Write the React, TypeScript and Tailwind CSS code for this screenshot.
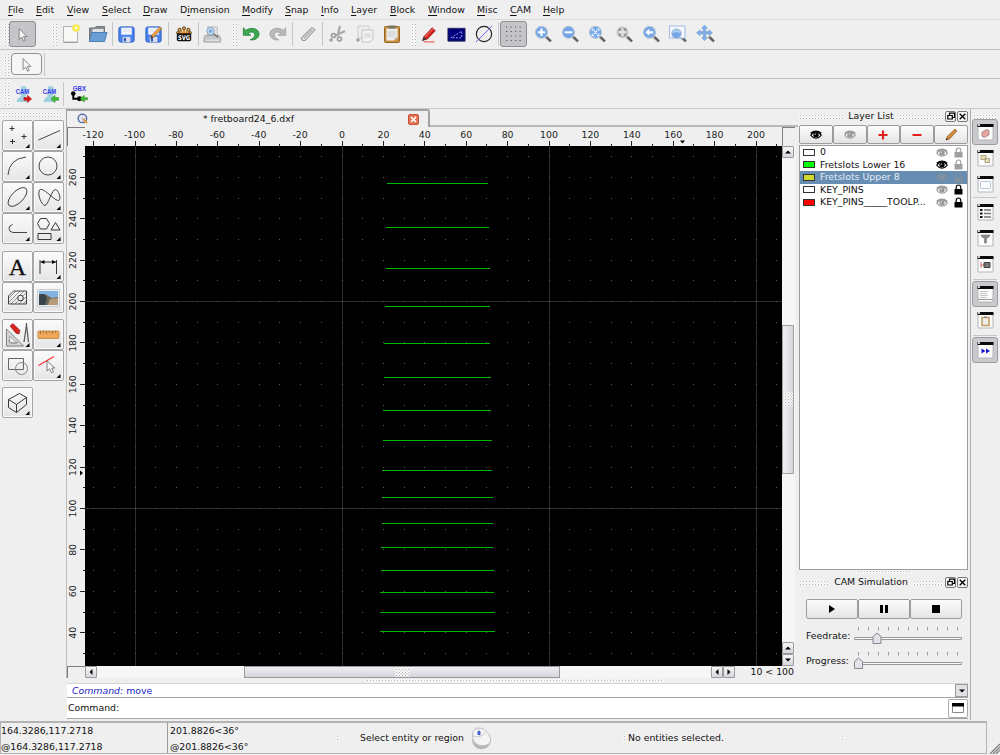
import type { ReactNode } from "react";

const menus = [
  { label: "File", key: 0, width: 28 },
  { label: "Edit", key: 0, width: 31 },
  { label: "View", key: 0, width: 35 },
  { label: "Select", key: 0, width: 41 },
  { label: "Draw", key: 0, width: 37 },
  { label: "Dimension", key: 1, width: 62 },
  { label: "Modify", key: 0, width: 43 },
  { label: "Snap", key: 0, width: 36 },
  { label: "Info", key: 0, width: 30 },
  { label: "Layer", key: 0, width: 39 },
  { label: "Block", key: 0, width: 38 },
  { label: "Window", key: 0, width: 49 },
  { label: "Misc", key: 0, width: 33 },
  { label: "CAM", key: 0, width: 33 },
  { label: "Help", key: 0, width: 40 },
];

// x1, x2, y in canvas pixels
const frets = [
  [302, 403, 37],
  [301, 404, 81],
  [301, 405, 122],
  [300, 405, 160],
  [299, 405, 197],
  [299, 406, 231],
  [298, 406, 264],
  [298, 407, 294],
  [297, 407, 324],
  [297, 408, 351],
  [297, 408, 377],
  [296, 408, 401],
  [296, 409, 424],
  [295, 409, 446],
  [295, 410, 466],
  [295, 410, 485],
];

const layers = [
  { name: "0", color: "#ffffff", visible: false, locked: false },
  { name: "Fretslots Lower 16", color: "#00ff00", visible: true, locked: false },
  { name: "Fretslots Upper 8", color: "#ced92e", visible: false, locked: false, selected: true },
  { name: "KEY_PINS", color: "#ffffff", visible: false, locked: true },
  { name: "KEY_PINS_____TOOLP...", color: "#ff0000", visible: false, locked: true },
];

const SCALE = 2.07;
const X0 = 257.5;
const Y0 = 570;

function range(from: number, to: number, step: number) {
  const out: number[] = [];
  for (let v = from; v <= to; v += step) out.push(v);
  return out;
}

function Svg({ size = 20, children }: { size?: number; children: ReactNode }) {
  return (
    <svg width={size} height={size} viewBox="0 0 20 20" fill="none" className="block shrink-0">
      {children}
    </svg>
  );
}

function Grip() {
  return (
    <div className="h-[23px] w-[5px] shrink-0 bg-[radial-gradient(#b0b0b0_0.7px,#fbfbfb_1px,transparent_1.5px)] bg-[length:3px_3px]" />
  );
}

function HGrip({ className = "" }: { className?: string }) {
  return (
    <div
      className={`h-[5px] bg-[radial-gradient(#b0b0b0_0.7px,#fbfbfb_1px,transparent_1.5px)] bg-[length:3px_3px] ${className}`}
    />
  );
}

function Sep({ tight = false }: { tight?: boolean }) {
  return <div className={`h-6 w-px shrink-0 bg-[#c6c6c6] ${tight ? "ml-px" : "mx-px"}`} />;
}

function Tool({ children }: { children: ReactNode }) {
  return <div className="flex h-[27px] w-[27px] shrink-0 items-center justify-center">{children}</div>;
}

function Pressed({ children }: { children: ReactNode }) {
  return (
    <div className="flex h-[26px] w-[27px] shrink-0 items-center justify-center rounded-[3px] border border-[#8f8f93] bg-[#c5c5c9]">
      {children}
    </div>
  );
}

function Cursor() {
  return (
    <Svg size={17}>
      <path d="M6 3v13l3-3 2.3 5 2-1-2.2-4.7h4.2z" fill="#f4f4f4" stroke="#777" strokeWidth="1" />
    </Svg>
  );
}

function FloppyShape() {
  return (
    <>
      <rect x="2" y="2" width="16" height="16" rx="2" fill="#4b83ee" stroke="#285bc0" />
      <rect x="4.5" y="2.8" width="11" height="7.4" fill="#f4f7fd" />
      <path d="M6 5h8M6 7h8" stroke="#c6cedb" strokeWidth=".6" />
      <rect x="6" y="12.5" width="8" height="5.5" fill="#d8dfe9" />
      <rect x="7.2" y="13.5" width="2.3" height="3.8" fill="#2b5db8" />
    </>
  );
}

function ZoomIcon({ kind }: { kind: string }) {
  const gray = kind === "select";
  return (
    <Svg>
      <path d="m12.5 12.5 5.5 5" stroke="#b7b7b7" strokeWidth="3.2" />
      <path d="m13.5 13 4.4 4.4" stroke="#5c5c5c" strokeWidth="2" />
      {kind === "window" && <rect x="1.5" y="2" width="15.5" height="12" fill="#f7f9fc" stroke="#9dbbe4" />}
      {kind === "pan" ? (
        <path
          d="m8.500 1 3 3.400H9.700v3.200h3.400V5.800l3.400 3-3.400 3V10H9.700v3.400h1.800l-3 3.300-3-3.300h1.800V10H4v1.800l-3.500-3 3.500-3v1.800h3.300V4.400H5.500z"
          fill="#7fafe8"
          stroke="#6a94cc"
          strokeWidth=".5"
        />
      ) : (
        <circle
          cx="8.500"
          cy={kind === "window" ? 9.7 : 8.3}
          r={kind === "window" ? 4.8 : gray ? 5.6 : 6}
          fill={gray ? "#c0c0c0" : "#75a7e8"}
          stroke={gray ? "#d2d2d2" : "#b6c2d2"}
        />
      )}
      {kind === "window" && <path d="M5 8.500q3.500-3 7 0" stroke="#acd0f6" strokeWidth="2" />}
      {kind === "in" && <path d="M8.500 4.500v7.600M4.700 8.300h7.600" stroke="#fff" strokeWidth="2" />}
      {kind === "out" && <path d="M4.700 8.300h7.600" stroke="#fff" strokeWidth="2" />}
      {kind === "auto" && (
        <path d="M5.200 7V5h2M9.800 5h2v2M11.800 9.600v2h-2M7.200 11.600h-2v-2M6.700 6.500l3.600 3.600M10.300 6.500l-3.600 3.600" stroke="#e9f2ff" strokeWidth="1.100" />
      )}
      {gray && (
        <>
          <rect x="4.500" y="4.300" width="8" height="8" fill="#999" />
          <path d="M8.500 4.500v7.600M4.700 8.300h7.600" stroke="#e4e4e4" strokeWidth="2.400" />
        </>
      )}
      {kind === "prev" && <path d="m8.300 4.800-4 3.500 4 3.500V9.500h4V7.200h-4z" fill="#fff" />}
    </Svg>
  );
}

function MainToolbar() {
  return (
    <div className="flex h-[30px] items-center border-b border-[#c4c4c4] pb-px pl-1">
      <Grip />
      <Pressed><Cursor /></Pressed>
      <div className="w-[16px]" />
      <Grip />
      <Tool>
        <Svg>
          <path d="M2.500 2.500h14v15.500h-14z" fill="#f8f8f7" stroke="#b5b5b2" />
          <path d="M2.500 18.500h14" stroke="#9b9b9b" />
          <circle cx="15" cy="4" r="3.800" fill="#f5ec4b" />
          <circle cx="15" cy="4" r="1.400" fill="#fffde0" />
        </Svg>
      </Tool>
      <Tool>
        <Svg>
          <path d="M1.500 17V4h5L8 2.500h8.500V16z" fill="#858b90" stroke="#6f767b" />
          <path d="M4.500 5h11v6h-11z" fill="#dfe2e4" />
          <path d="M4 8.500h15L16.500 17.500H1.300z" fill="#699ed3" stroke="#4b7fb5" />
        </Svg>
      </Tool>
      <Sep tight />
      <Tool><Svg size={19}><FloppyShape /></Svg></Tool>
      <Tool>
        <Svg size={19}>
          <FloppyShape />
          <path d="m7 14 1-3 8.500-9 2 2-8.500 9z" fill="#f4a13d" stroke="#b06a1e" strokeWidth=".7" />
          <path d="m7 14 1-3 2 2z" fill="#333" />
        </Svg>
      </Tool>
      <Sep />
      <Tool>
        <Svg size={16}>
          <path d="M10 1v9M3.500 4l6.500 6 6.500-6M1.500 9h17" stroke="#e79b2d" strokeWidth="2.400" />
          <g fill="#eda339" stroke="#111" strokeWidth=".8">
            <circle cx="10" cy="2.800" r="2" />
            <circle cx="4.500" cy="4.600" r="2" />
            <circle cx="15.500" cy="4.600" r="2" />
            <circle cx="2.400" cy="8.600" r="1.700" />
            <circle cx="17.600" cy="8.600" r="1.700" />
          </g>
          <rect x="1" y="9" width="18" height="10" rx="2" fill="#111" />
          <text x="2.500" y="17" textLength="15" lengthAdjust="spacingAndGlyphs" fill="#fff" className="text-[8px] font-bold">SVG</text>
        </Svg>
      </Tool>
      <Sep tight />
      <Tool>
        <Svg size={19}>
          <path d="M5 2h10v9H5z" fill="#e8e8e8" stroke="#bbb" />
          <path d="M2 11h15l1.500 3v4H1v-4z" fill="#c4c6c8" stroke="#a4a6a8" />
          <path d="M3 16h14" stroke="#eee" />
          <circle cx="8" cy="6.500" r="4" fill="#bcd8f1" stroke="#8ba3b8" />
          <circle cx="8" cy="6.500" r="1.700" fill="#74a5d6" />
          <path d="m11 9 5 4" stroke="#777" strokeWidth="1.600" />
        </Svg>
      </Tool>
      <div className="w-1.5" />
      <Grip />
      <Tool>
        <Svg size={18}>
          <path d="M1.500 3v8.500h8.300L7 9c4-2.500 8-.5 7 3-.6 2-2.600 3.600-5 4.500 6 .8 10-2.400 10-6.500 0-5.800-8.500-8.500-14.700-4z" fill="#3da650" stroke="#1c7c31" strokeWidth=".8" />
        </Svg>
      </Tool>
      <Tool>
        <Svg size={18}>
          <path d="M18.500 3v8.500h-8.300L13 9c-4-2.500-8-.5-7 3 .6 2 2.600 3.600 5 4.500-6 .8-10-2.400-10-6.500 0-5.800 8.500-8.500 14.700-4z" fill="#b9b9b9" stroke="#9a9a9a" strokeWidth=".8" />
        </Svg>
      </Tool>
      <Sep />
      <Tool>
        <Svg size={18}>
          <path d="m2.500 14.500 11-11q3-.5 4 2L7 17q-4 1-4.500-2.500z" fill="#e2e2e2" stroke="#9a9a9a" strokeWidth="1.200" />
          <path d="m5.500 14.500 9-9" stroke="#a5a5a5" strokeWidth="1.300" />
        </Svg>
      </Tool>
      <Sep />
      <Tool>
        <Svg>
          <path d="M12 2 9.500 12M17 7l-10 5" stroke="#aaa" strokeWidth="2.300" />
          <circle cx="5.500" cy="11.500" r="2" stroke="#9b9b9b" strokeWidth="1.600" />
          <circle cx="11.500" cy="15" r="2" stroke="#9b9b9b" strokeWidth="1.600" />
          <path d="M1 16h4M3 14v4" stroke="#888" />
        </Svg>
      </Tool>
      <Tool>
        <Svg>
          <path d="M3 2h11v12H3z" fill="#eee" stroke="#cdcdcd" />
          <path d="M7 6h11v9l-3 3H7z" fill="#f3f3f3" stroke="#c4c4c4" />
          <path d="M9 9h7v5H9z" fill="#e2e2e2" />
          <path d="M1 16h4M3 14v4" stroke="#888" />
        </Svg>
      </Tool>
      <Tool>
        <Svg>
          <rect x="2.500" y="2.500" width="15" height="16" rx="1" fill="#c8903f" stroke="#956526" />
          <path d="M4.500 4.500h11v9l-3 3h-8z" fill="#ededed" />
          <path d="M6 8h8M6 10h8M6 12h6" stroke="#ccc" />
          <path d="M6.500 1.500h7v3h-7z" fill="#77736a" />
          <path d="m12.500 16.500 3-3h-3z" fill="#b7b7b7" />
        </Svg>
      </Tool>
      <div className="w-1.5" />
      <Grip />
      <Tool>
        <Svg size={17}>
          <path d="m3 13 10-11 4 3.500L7 16z" fill="#d41e1e" stroke="#8f1717" strokeWidth=".7" />
          <path d="m5 13 9-10" stroke="#f26b5d" strokeWidth="1.400" />
          <path d="m3 12.500-2 5.500 6-2.500z" fill="#4a312a" />
          <path d="M3 18.700h13" stroke="#f04848" strokeWidth="1.200" />
        </Svg>
      </Tool>
      <Tool>
        <Svg size={19}>
          <path d="M1 3.500h18v13.500H1z" fill="#00007c" stroke="#26265a" />
          <path d="m4 13.500 11.500-7v7z" stroke="#a9a9e5" strokeDasharray="2 1.500" />
        </Svg>
      </Tool>
      <Tool>
        <Svg size={18}>
          <circle cx="10" cy="10" r="8.500" stroke="#222" strokeWidth="1.300" />
          <path d="M1 19 19 1" stroke="#6464f3" />
        </Svg>
      </Tool>
      <div className="mx-px h-6 w-px bg-[#c6c6c6]" />
      <Pressed>
        <Svg>
          {[3, 7.5, 12, 16.5].map((y) => (
            <path key={y} d={`M2 ${y}h17`} stroke="#555" strokeWidth="1.200" strokeDasharray="1.200 3.300" />
          ))}
        </Svg>
      </Pressed>
      <div className="ml-[2px] flex gap-[0.2px]">
        {["in", "out", "auto", "select", "prev", "window", "pan"].map((kind) => (
          <Tool key={kind}><ZoomIcon kind={kind} /></Tool>
        ))}
      </div>
    </div>
  );
}

function CamIcon({ red }: { red?: boolean }) {
  return (
    <Svg size={18}>
      <path d="M8 1.500h5l2 5-2 7 3 5.500H3q0-4 4-6z" fill="#9ed1dc" />
      <text x="2" y="10.500" textLength="15" lengthAdjust="spacingAndGlyphs" fill="#3a3aee" className="font-['Liberation_Sans'] text-[8px] font-bold">CAM</text>
      {red ? (
        <path d="M11 14h4v-2.500l4.500 4-4.500 4V17h-4z" fill="#e31515" stroke="#961010" strokeWidth=".6" />
      ) : (
        <path d="M19.500 14h-4v-2.500l-4.500 4 4.500 4V17h4z" fill="#43bd35" stroke="#27851d" strokeWidth=".6" />
      )}
    </Svg>
  );
}

const toolRows: ReactNode[][] = [
  [
    <path key="a" d="M9 5v5M6.500 7.500h5M21 13v5M18.500 15.500h5M9.500 18v5M7 20.500h5" stroke="#222" />,
    <path key="b" d="M4.500 19 26 9.500" stroke="#333" />,
  ],
  [
    <path key="a" d="M5 23Q6 7 23 5" stroke="#333" />,
    <circle key="b" cx="14" cy="14" r="9" stroke="#333" />,
  ],
  [
    <ellipse key="a" cx="14.500" cy="14" rx="12" ry="5.800" transform="rotate(-45 14.500 14)" stroke="#333" />,
    <path key="b" d="M5.500 7C3 12 8 22.500 11 22.500S18 6 21.500 6.500 28 18 24 17.500 8 3 5.500 7z" stroke="#333" />,
  ],
  [
    <path key="a" d="M9.500 10.500Q6 11.500 6 14.500q0 3.500 4 4h14" stroke="#333" />,
    <path key="b" d="M6.500 4.500h6l3 5-3 5.500h-6l-3-5.500zM21.500 8.500l4.500 7.500h-9zM4 19.500h13v6H4z" stroke="#222" />,
  ],
];

function ToolButton({ children, menu = true }: { children: ReactNode; menu?: boolean }) {
  return (
    <div className="flex h-[31px] w-[31px] items-center justify-center rounded-[2px] border border-[#a6a6a9] bg-linear-to-b from-[#fbfbfb] to-[#e5e5e7] shadow-[inset_0_0_0_1px_#fafafa]">
      <svg width="29" height="29" viewBox="0 0 29 29" fill="none" strokeWidth=".9">
        {children}
        {menu && <path d="M26.500 23v4h-4z" fill="#000" />}
      </svg>
    </div>
  );
}

function LeftTools() {
  return (
    <div className="w-[66px] shrink-0 pl-[2px] pt-[3px]">
      <HGrip className="mb-[3px] w-[61px]" />
      <div className="grid grid-cols-[31px_31px]">
        {toolRows.flat().map((icon, i) => (
          <ToolButton key={i}>{icon}</ToolButton>
        ))}
      </div>
      <div className="mt-[7px] grid grid-cols-[31px_31px]">
        <ToolButton menu={false}>
          <text x="14.500" y="23" textAnchor="middle" fill="#111" stroke="#111" strokeWidth=".3" className="font-['Liberation_Serif'] text-[24px]">A</text>
        </ToolButton>
        <ToolButton>
          <path d="M6 22V8M22.500 22V8M6.500 10h16" stroke="#222" />
          <path d="m6.500 10 4-2v4zM22 10l-4-2v4z" fill="#000" />
        </ToolButton>
        <ToolButton menu={false}>
          <clipPath id="hatch"><path d="m5.500 13 5-5h13v13h-18z" /></clipPath>
          <g clipPath="url(#hatch)">
            <path d="M0 13 13 0M0 17 17 0M0 21 21 0M2 23 25 0M6 23 29 0M10 23 33 0M14 23 37 0M18 23 41 0" stroke="#666" strokeWidth=".7" />
          </g>
          <path d="m5.500 13 5-5h13v13h-18z" stroke="#333" />
          <circle cx="17.500" cy="15" r="2.800" fill="#eee" stroke="#222" />
        </ToolButton>
        <ToolButton menu={false}>
          <path d="M3.500 6.500h22v17h-22z" fill="#e9eef2" stroke="#c6c9cc" />
          <path d="M5 8h19v8H5z" fill="#83b4e0" />
          <path d="m5 11 6 0 7 4 6-1v8H5z" fill="#6e695d" />
          <path d="m14 22 2-6 8-1v7z" fill="#b59b77" />
          <path d="M5 12q5-3 8 3l-2 7H5z" fill="#36444a" />
        </ToolButton>
      </div>
      <div className="mt-[6px] grid grid-cols-[31px_31px]">
        <ToolButton>
          <path d="M3.500 9v17h17z" fill="#d6d6d6" stroke="#777" />
          <path d="M6.500 16v7H14z" fill="#eee" stroke="#999" />
          <path d="M5 20a7 7 0 0 0 10 2" stroke="#888" />
          <path d="m7 6 3-2.500 7 7-1 3.500-3-.8z" fill="#d92323" stroke="#8b1414" strokeWidth=".6" />
          <path d="m23.500 5-2.500 17M23.500 5l2 17M23.500 3v3" stroke="#555" strokeWidth="1.200" />
        </ToolButton>
        <ToolButton>
          <rect x="4" y="11" width="21" height="7.500" rx="1" fill="#eea75b" stroke="#c58a4a" />
          <path d="M6.500 11v3M9.500 11v2M12.500 11v3M15.500 11v2M18.500 11v3M21.500 11v2" stroke="#8c5a25" strokeWidth=".7" />
        </ToolButton>
        <ToolButton menu={false}>
          <path d="M5.500 7.500h15v11h-15z" stroke="#555" />
          <circle cx="18.500" cy="17.500" r="6" stroke="#777" />
        </ToolButton>
        <ToolButton>
          <path d="m4.500 14.500 15.500-9" stroke="#f23333" strokeWidth="1.200" />
          <path d="M13 10v10l2.500-2.200 2 4 2-1-1.800-3.800h3.300z" fill="#f8f8f8" stroke="#666" strokeWidth=".8" />
        </ToolButton>
      </div>
      <div className="mt-[6px]">
        <ToolButton>
          <path d="m5.500 11.500 11-6 7 4v7l-10 8-8-5zM5.500 11.500l8 5 10-7M13.500 16.500v8" stroke="#222" />
        </ToolButton>
      </div>
    </div>
  );
}

function TopRuler() {
  return (
    <svg width="697" height="19" className="block overflow-visible">
      {range(-120, 210, 10).map((v) => {
        const x = X0 + v * SCALE;
        const major = v % 20 === 0;
        return (
          <g key={v}>
            <path d={`M${Math.round(x) - 0.5} ${major ? 14 : 17}V19`} stroke="#222" />
            {major && (
              <text x={x - (v < 0 ? 1 : 0.5)} y="10.500" textAnchor="middle" fill="#222">{v}</text>
            )}
          </g>
        );
      })}
      <path d="M595 13.500h5l-2.500 3z" fill="#000" />
    </svg>
  );
}

function SideRuler() {
  return (
    <svg width="18" height="520" className="block">
      {range(30, 270, 10).map((v) => {
        const y = Y0 - v * SCALE;
        const major = v % 20 === 0;
        return (
          <g key={v}>
            <path d={`M${major ? 13 : 16} ${Math.round(y) - 0.5}H18`} stroke="#222" />
            {major && (
              <text transform={`translate(8.500 ${y - 0.5}) rotate(-90)`} textAnchor="middle" fill="#222">{v}</text>
            )}
          </g>
        );
      })}
      <path d="M13 324.500v5l3-2.500z" fill="#000" />
    </svg>
  );
}

function Drawing() {
  const xs = range(-120, 210, 10).map((v) => Math.round(X0 + v * SCALE));
  const ys = range(30, 270, 10).map((v) => Math.round(Y0 - v * SCALE));
  return (
    <svg width="697" height="520" className="block bg-black">
      {[-100, 0, 100, 200].map((v) => (
        <path key={v} d={`M${Math.round(X0 + v * SCALE) - 0.5} 0V520`} stroke="#2d2d2d" />
      ))}
      {[100, 200].map((v) => (
        <path key={v} d={`M0 ${Math.round(Y0 - v * SCALE) - 0.5}H697`} stroke="#2d2d2d" />
      ))}
      {ys.map((y) => xs.map((x) => <rect key={`${x}-${y}`} x={x - 1} y={y - 1} width="1" height="1" fill="#5c5c5c" />))}
      {frets.map(([x1, x2, y]) => (
        <rect key={y} x={x1} y={y} width={x2 - x1} height="1" fill="#00b800" />
      ))}
    </svg>
  );
}

function ScrollButton({ d }: { d: string }) {
  return (
    <div className="flex h-[12px] w-[12px] shrink-0 items-center justify-center rounded-[1px] border border-[#9a9a9e] bg-linear-to-b from-[#f8f8f9] to-[#d6d7dc]">
      <svg width="8" height="8" viewBox="0 0 8 8"><path d={d} fill="#000" /></svg>
    </div>
  );
}

const arrows = {
  up: "M1 5.500h6L4 2.500z",
  down: "M1 2.500h6L4 5.500z",
  left: "M5.500 1v6L2.500 4z",
  right: "M2.500 1v6L5.500 4z",
};

function Corner() {
  return <div className="h-full w-full border-l border-t border-[#7d7d7d]" />;
}

function DrawingWindow() {
  return (
    <div className="flex w-[732px] flex-col">
      <div className="flex h-[18px]">
        <div className="flex w-[364px] items-center rounded-tr-[3px] border-l border-r-2 border-t-2 border-[#a2a2a2] pl-[10px]">
          <Svg size={12}>
            <circle cx="9" cy="9" r="7" fill="#f1f2f8" stroke="#5870a8" strokeWidth="2.500" />
            <path d="M9 4v10M4 9h10" stroke="#a9b4ce" />
            <path d="m10 10 7 7" stroke="#e0993c" strokeWidth="3" />
          </Svg>
          <div className="w-[319px] pb-px text-center">* fretboard24_6.dxf</div>
          <div className="flex h-[11px] w-[11px] items-center justify-center rounded-[2px] border border-[#c95136] bg-[#e47658]">
            <svg width="7" height="7" viewBox="0 0 7 7"><path d="m1 1 5 5M6 1 1 6" stroke="#fff" strokeWidth="1.600" /></svg>
          </div>
        </div>
        <div className="flex-1 border-b-2 border-[#b9b9b9]" />
      </div>
      <div className="box-content grid h-[551px] w-[728px] grid-cols-[18px_697px_13px] grid-rows-[19px_520px_12px] border-l border-[#bdbdbd]">
        <Corner />
        <TopRuler />
        <Corner />
        <SideRuler />
        <Drawing />
        <div className="flex flex-col bg-[#f6f6f6]">
          <ScrollButton d={arrows.up} />
          <div className="h-[167px]" />
          <div className="flex h-[149px] w-[12px] items-center justify-center border border-[#a2a2a5] bg-linear-to-r from-[#f0f0f3] to-[#d4d5dc]">
            <HGrip className="h-[15px]! w-[9px]" />
          </div>
          <div className="flex-1" />
          <ScrollButton d={arrows.up} />
          <ScrollButton d={arrows.down} />
        </div>
        <Corner />
        <div className="col-span-2 flex bg-[#efefef]">
          <ScrollButton d={arrows.left} />
          <div className="w-[147px] bg-[#f6f6f6]" />
          <div className="flex h-[12px] w-[316px] items-center justify-center border border-[#98989b] bg-linear-to-b from-[#f0f0f3] to-[#d4d5dc]">
            <HGrip className="h-[9px]! w-[15px]" />
          </div>
          <div className="w-[151px] bg-[#f6f6f6]" />
          <ScrollButton d={arrows.left} />
          <ScrollButton d={arrows.right} />
          <div className="flex-1 whitespace-nowrap pr-px text-right leading-[12px]">10 &lt; 100</div>
        </div>
      </div>
    </div>
  );
}

function Eye({ color, glint = "#eee" }: { color: string; glint?: string }) {
  return (
    <svg width="12" height="9" viewBox="0 0 16 12" fill="none" className="shrink-0">
      <path d="M1 7Q4 2.500 8 2.500t7 4.500q-3 4-7 4T1 7z" stroke={color} strokeWidth="1.600" />
      <path d="M1 4.500q7-6 14 0" stroke={color} strokeWidth="1.800" />
      <circle cx="8" cy="6.500" r="3.600" fill={color} />
      <circle cx="7" cy="5.500" r=".9" fill={glint} />
    </svg>
  );
}

function Lock({ color }: { color: string }) {
  return (
    <svg width="9" height="11" viewBox="0 0 9 11" fill="none" className="shrink-0">
      <path d="M2.200 5V3.500q0-2.500 2.300-2.500t2.300 2.500V5" stroke={color} strokeWidth="1.200" />
      <path d="M.5 5h8v5.500h-8z" fill={color} />
    </svg>
  );
}

function DockTitle({ label }: { label: string }) {
  return (
    <div className="flex h-[12px] items-center">
      <HGrip className="flex-1" />
      <div className="whitespace-nowrap px-[5px] text-center">{label}</div>
      <HGrip className="flex-1" />
      <div className="ml-0.5 flex h-[11px] w-[11px] items-center justify-center rounded-[2px] border border-[#777] bg-[#f5f5f5]">
        <svg width="8" height="8" viewBox="0 0 8 8" fill="none"><path d="M2.500 3V1.200h5V5.500H6M.8 3.500h4.500V7H.8z" stroke="#000" strokeWidth="1.200" /></svg>
      </div>
      <div className="ml-px flex h-[11px] w-[11px] items-center justify-center rounded-[2px] border border-[#777] bg-[#f5f5f5]">
        <svg width="7" height="7" viewBox="0 0 7 7"><path d="m.7.7 5.600 5.600M6.300.7.7 6.300" stroke="#000" strokeWidth="1.300" /></svg>
      </div>
    </div>
  );
}

const buttonFace =
  "flex flex-1 items-center justify-center rounded-[2px] border border-[#9c9c9f] bg-linear-to-b from-[#fcfcfc] to-[#e4e4e6]";

function LayerList() {
  return (
    <div className="h-[459px] pl-px pt-px">
      <DockTitle label="Layer List" />
      <div className="mt-[3px] flex h-[19px] w-[169px]">
        <div className={buttonFace}><Eye color="#000" /></div>
        <div className={buttonFace}><Eye color="#999" /></div>
        <div className={buttonFace}><svg width="10" height="10" viewBox="0 0 10 10"><path d="M5 .5v9M.5 5h9" stroke="#e02020" strokeWidth="2.200" /></svg></div>
        <div className={buttonFace}><svg width="10" height="10" viewBox="0 0 10 10"><path d="M.5 5h9" stroke="#e02020" strokeWidth="2" /></svg></div>
        <div className={buttonFace}>
          <svg width="13" height="13" viewBox="0 0 13 13"><path d="m1 12 1.200-3.500L10 1l2 2-7.500 8z" fill="#d28b3b" stroke="#8f5b22" strokeWidth=".7" /><path d="m1 12 .7-2 1.500 1.300z" fill="#222" /></svg>
        </div>
      </div>
      <div className="mt-px h-[425px] w-[169px] border border-[#9c9c9c] bg-white">
        {layers.map((layer) => (
          <div
            key={layer.name}
            className={`flex h-[12.5px] items-center pl-[3px] pr-1 ${layer.selected ? "bg-[#678db2] text-[#e4edf6]" : ""}`}
          >
            <div className="h-[7px] w-[12px] border border-[#333]" style={{ background: layer.color }} />
            <div className="ml-[5px] w-[116px] whitespace-nowrap leading-[12px]">{layer.name}</div>
            <Eye
              color={layer.visible ? "#000" : layer.selected ? "#7e8fa0" : "#999"}
              glint={layer.selected ? "#8fa3b7" : "#eee"}
            />
            <div className="ml-[6px]">
              <Lock color={layer.locked ? "#000" : layer.selected ? "#7e8fa0" : "#a0a0a0"} />
            </div>
          </div>
        ))}
      </div>
    </div>
  );
}

function Slider({ label, value }: { label: string; value: number }) {
  return (
    <div className="flex h-[25px] items-center">
      <div className="w-[48px] whitespace-nowrap pb-[2px]">{label}</div>
      <svg width="108" height="21" viewBox="0 0 108 21" fill="none">
        {range(0, 10, 1).map((i) => (
          <path key={i} d={`M${4.5 + Math.round(i * 9.9)} 1v3.500`} stroke="#999" />
        ))}
        <path d="M.5 11.500h107v2H.5z" fill="#f8f8f8" stroke="#9a9a9a" />
        <path d={`M${value - 4} 17.500v-7l4-3.500 4 3.500v7z`} fill="#e2e3e8" stroke="#88888c" />
      </svg>
    </div>
  );
}

function CamSimulation() {
  return (
    <div className="h-[114px] pl-px">
      <HGrip className="mx-auto mt-[2px] h-[3px]! w-[54px]" />
      <div className="mt-[3px]"><DockTitle label="CAM Simulation" /></div>
      <div className="ml-[7px] mt-[11px] flex h-[20px] w-[156px]">
        <div className={buttonFace}><svg width="8" height="8"><path d="M1 0v8l6-4z" /></svg></div>
        <div className={buttonFace}><svg width="8" height="8"><path d="M0 0h3v8H0zM5 0h3v8H5z" /></svg></div>
        <div className={buttonFace}><svg width="8" height="8"><path d="M0 0h8v8H0z" /></svg></div>
      </div>
      <div className="ml-[7px] mt-[5px]">
        <Slider label="Feedrate:" value={23} />
        <Slider label="Progress:" value={4.5} />
      </div>
    </div>
  );
}

function PanelIcon({ kind }: { kind: number }) {
  return (
    <svg width="17" height="18" viewBox="0 0 17 18" fill="none">
      <path d="M1 1.500h15v15.500H1z" fill="#fbfbfb" stroke="#b5b5b8" />
      <path d="M.5 1h16v3H.5z" fill="#0a0a0a" />
      <path d="M1 1h2v2H1z" fill="#ccc" />
      {kind === 0 && <path d="m5 9 5-2.500 2 1V12l-5 2.500L5 13z" fill="#e9a3a0" stroke="#8a7a7a" strokeWidth=".7" />}
      {kind === 1 && <path d="M4 6.500h5v4H4zM8 9.500h4.500v4H8z" fill="#eadfb8" stroke="#aaa07f" />}
      {kind === 2 && <rect x="3.500" y="6.500" width="10" height="7" rx="1" fill="#fafcff" stroke="#b7c5d8" />}
      {kind === 3 && (
        <>
          <path d="M3 7h2.500M3 10.500h2.500M3 14h2.500" stroke="#111" strokeWidth="2" />
          <path d="M7 7h7M7 10.500h7M7 14h7" stroke="#777" strokeWidth="1.300" />
        </>
      )}
      {kind === 4 && <path d="M4 6h9l-1 2-2.500 1.500V14h-2V9.500L5 8z" fill="#888" stroke="#777" strokeWidth=".6" />}
      {kind === 5 && (
        <>
          <path d="M4 7v6M4 10h3" stroke="#c66" />
          <path d="M7 7.500h6v5H7z" fill="#777" stroke="#444" />
        </>
      )}
      {kind === 6 && (
        <>
          <path d="M3 6.500h8M3 8.500h7M3 10.500h8M3 12.500h7" stroke="#b9b9b9" strokeWidth=".8" />
          <path d="M1 14.500h15" stroke="#999" />
        </>
      )}
      {kind === 7 && (
        <>
          <path d="M5 6.500h7v8H5z" fill="#eee" stroke="#c69a5a" strokeWidth="1.500" />
          <path d="M7 5.500h3v1.500H7z" fill="#888" />
        </>
      )}
      {kind === 8 && <path d="M4.500 7.500v5l4-2.500zM9 7.500v5l4-2.500z" fill="#1414dc" />}
    </svg>
  );
}

function RightTools() {
  return (
    <div className="flex w-[30px] shrink-0 flex-col items-center border-l border-[#b0b0b0] pr-px pt-[5px]">
      <HGrip className="w-[24px]" />
      {range(0, 8, 1).map((i) => (
        <div key={i} className="flex flex-col items-center">
          {(i === 3 || i === 6 || i === 8) && (
            <div className={`mb-px h-px w-[24px] bg-[#c6c6c6] ${i === 3 ? "" : "mt-[2px]"}`} />
          )}
          <div
            className={`flex h-[26px] w-[26px] items-center justify-center rounded-[3px] border ${i === 0 || i === 6 || i === 8 ? "border-[#9c9ca0] bg-[#c9c9ce]" : "border-transparent"}`}
          >
            <PanelIcon kind={i} />
          </div>
        </div>
      ))}
    </div>
  );
}

function StatusBar() {
  return (
    <div className="flex h-[35px] pb-px pt-px">
      <div className="flex h-[33px] w-[987px] border border-t-2 border-[#b4b4b4]">
        <div className="w-[167px] border-r border-[#9c9c9c] leading-[15.500px]">
          <div>164.3286,117.2718</div>
          <div>@164.3286,117.2718</div>
        </div>
        <div className="w-[168px] pl-[2px] leading-[15.500px]">
          <div>201.8826&lt;36°</div>
          <div>@201.8826&lt;36°</div>
        </div>
        <div className="flex w-[287px] items-center pb-px">
          <HGrip className="h-[6px]! w-[3px]" />
          <div className="ml-[21px] w-[110px] whitespace-nowrap">Select entity or region</div>
          <svg width="22" height="24" viewBox="0 0 22 24" fill="none">
            <ellipse cx="11.500" cy="14.500" rx="9.300" ry="8.800" fill="#b7b7b9" />
            <path d="M2.500 9q0-7 7-7c6 0 12 8 11 13-1 6-13 6-16 1-1.500-2-2-4-2-7z" fill="#f4f4f5" stroke="#c0c0c2" />
            <path d="M3 10q7 3 13-4M9 3l1 8M5 1l1.500 2" stroke="#cacad0" />
            <ellipse cx="9" cy="7" rx="1.700" ry="2.200" fill="#4563cc" />
          </svg>
        </div>
        <div className="flex items-center pb-px">
          <HGrip className="h-[6px]! w-[3px]" />
          <div className="ml-[2px] w-[213px]">No entities selected.</div>
          <HGrip className="h-[6px]! w-[3px]" />
        </div>
      </div>
      <svg width="13" height="33" fill="none"><path d="m3 33 10-10M6 33l7-7M9 33l4-4" stroke="#777" strokeWidth="1.200" /></svg>
    </div>
  );
}

export default function App() {
  return (
    <div className="h-[755px] w-[1000px] overflow-hidden bg-[#efefef] font-['DejaVu_Sans',sans-serif] text-[9.35px] leading-[12px] text-[#111]">
      <div className="flex h-[20px] items-center border-b border-[#d9d9d9] pl-[8px]">
        {menus.map((menu) => (
          <div key={menu.label} style={{ width: menu.width }}>
            {menu.label.slice(0, menu.key)}
            <span className="underline underline-offset-2">{menu.label[menu.key]}</span>
            {menu.label.slice(menu.key + 1)}
          </div>
        ))}
      </div>
      <MainToolbar />
      <div className="flex h-[29px] items-center border-b border-[#c4c4c4] pl-1">
        <Grip />
        <div className="ml-[2px] flex h-[22px] w-[31px] items-center justify-center rounded-[4px] border-[1.500px] border-[#929292] bg-[#f6f6f6]">
          <Cursor />
        </div>
        <div className="ml-[2px] h-[23px] w-px bg-[#c6c6c6]" />
      </div>
      <div className="flex h-[30px] items-center border-b border-[#c9c9c9] pl-1">
        <Grip />
        <div className="mr-px flex items-center">
          <Tool><CamIcon red /></Tool>
          <Tool><CamIcon /></Tool>
          <div className="h-6 w-px bg-[#c6c6c6]" />
        </div>
        <Tool>
          <Svg size={19}>
            <text x="4" y="7.500" textLength="14" lengthAdjust="spacingAndGlyphs" fill="#3a3aee" className="font-['Liberation_Sans'] text-[7px] font-bold">GBX</text>
            <path d="M4.500 10v5.500h6" stroke="#000" strokeWidth="2" />
            <circle cx="4.500" cy="10" r="2.400" fill="#000" />
            <circle cx="11" cy="15.500" r="2.600" fill="#000" />
            <path d="M19.500 14.500h-3.500V12l-4.500 3.500 4.500 3.500v-2.500h3.500z" fill="#43bd35" stroke="#27851d" strokeWidth=".6" />
          </Svg>
        </Tool>
      </div>

      <div className="flex h-[611px]">
        <LeftTools />
        <div className="w-[904px] shrink-0">
          <div className="flex h-[573px]">
            <div className="w-[732px] shrink-0">
              <DrawingWindow />
              <HGrip className="ml-[300px] mt-px h-[3px]! w-[298px]" />
            </div>
            <div className="w-[170px]">
              <LayerList />
              <CamSimulation />
            </div>
          </div>
          <div className="ml-px mt-px flex h-[14px] w-[901px] items-center justify-between border-t border-[#d4d4d4] bg-white pl-[5px] text-[#1c1cc4]">
            <div><i>Command:</i> move</div>
            <div className="flex h-[13px] w-[13px] items-center justify-center border border-[#999] bg-[#dfe0e4]">
              <svg width="8" height="8"><path d={arrows.down} /></svg>
            </div>
          </div>
          <div className="ml-px flex h-[22px] w-[901px] items-center justify-between border-b border-t border-[#a5a5a5] bg-white pl-px">
            <div>Command:</div>
            <div className="flex h-[19px] w-[20px] items-center justify-center rounded-[2px] border border-[#aaa]">
              <svg width="12" height="10" fill="none"><path d="M.5 1.500h11v8H.5z" stroke="#888" /><path d="M0 0h12v3.500H0z" fill="#000" /></svg>
            </div>
          </div>
        </div>
        <RightTools />
      </div>
      <StatusBar />
    </div>
  );
}
